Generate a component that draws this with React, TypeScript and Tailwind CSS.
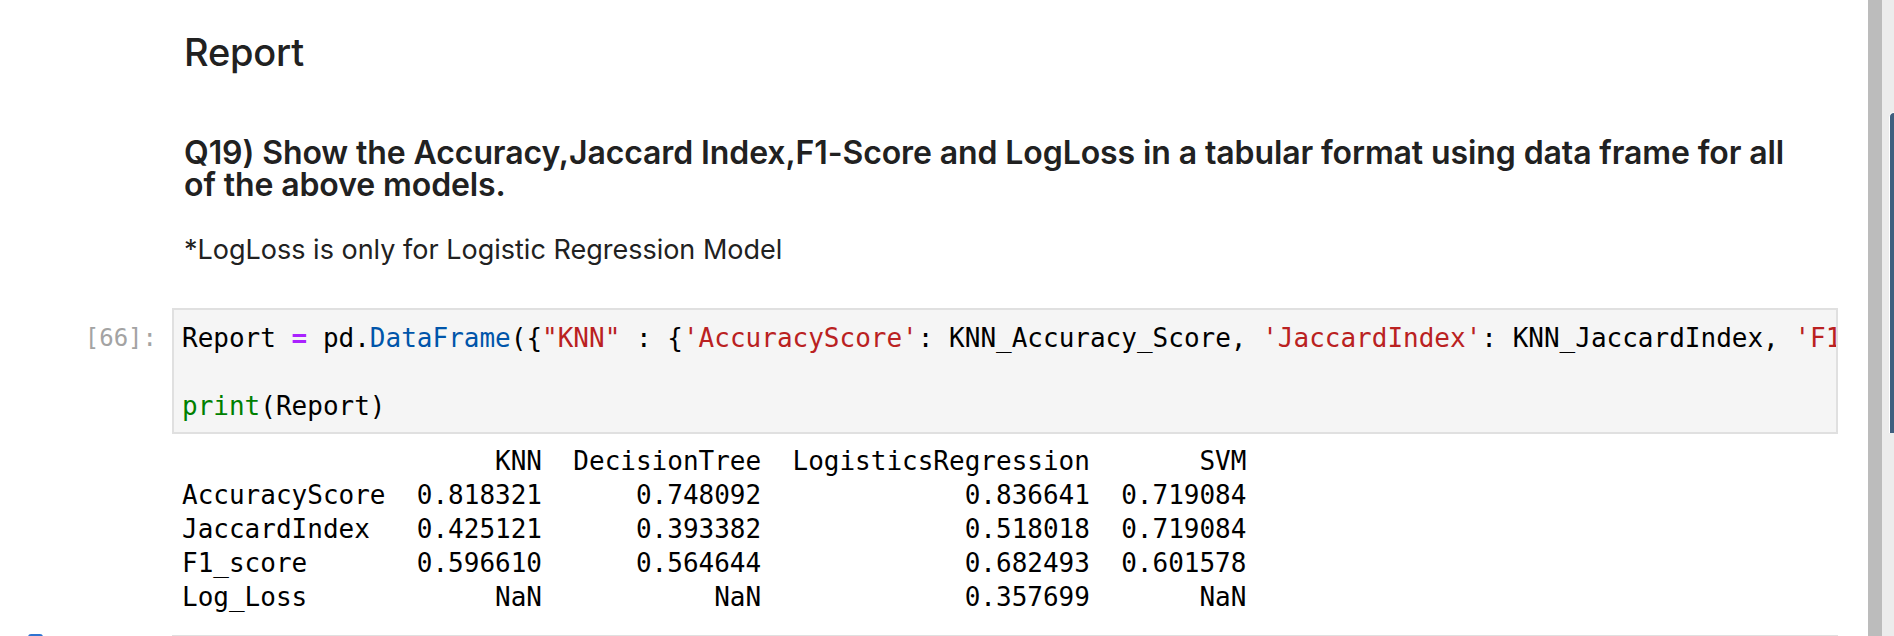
import React from "react";

const mono = { fontFamily: '"DejaVu Sans Mono", "Liberation Mono", monospace' };

const outputText = `                    KNN  DecisionTree  LogisticsRegression       SVM
AccuracyScore  0.818321      0.748092             0.836641  0.719084
JaccardIndex   0.425121      0.393382             0.518018  0.719084
F1_score       0.596610      0.564644             0.682493  0.601578
Log_Loss            NaN           NaN             0.357699       NaN`;

export default function App() {
  return (
    <div className="w-[1894px] h-[636px] flex bg-white overflow-hidden">
      <div className="flex-1 flex flex-col min-w-0">
        {/* Markdown cell */}
        <div
          className="pl-[184px] pt-[33px] text-[#212121]"
          style={{ fontFamily: 'Inter, "Noto Sans", sans-serif' }}
        >
          <h2 className="text-[38px] leading-none font-medium tracking-[-0.2px]">Report</h2>
          <h3 className="mt-[66px] w-[1630px] text-[32px] leading-[32px] font-semibold tracking-[-0.1px]">
            Q19) Show the Accuracy,Jaccard Index,F1-Score and LogLoss in a tabular format using data frame for all of the above models.
          </h3>
          <p className="mt-[32px] text-[27px] leading-[34px]">
            *LogLoss is only for Logistic Regression Model
          </p>
        </div>

        {/* Code cell */}
        <div className="mt-[41px] flex">
          <div
            className="w-[172px] shrink-0 pr-[15px] pt-[13px] text-right text-[24px] leading-[34px] text-[#a3a3a3]"
            style={mono}
          >
            [66]:
          </div>
          <div className="w-[1666px] shrink-0">
            <div
              className="h-[126px] border-2 border-[#e0e0e0] bg-[#f5f5f5] pl-[8px] pt-[11px] overflow-hidden text-[26px] leading-[34px] text-[#000] whitespace-pre"
              style={mono}
            >
              <div>
                Report <span className="text-[#aa22ff] font-bold">=</span> pd.
                <span className="text-[#0055aa]">DataFrame</span>({"{"}
                <span className="text-[#ba2121]">"KNN"</span> : {"{"}
                <span className="text-[#ba2121]">'AccuracyScore'</span>: KNN_Accuracy_Score,{" "}
                <span className="text-[#ba2121]">'JaccardIndex'</span>: KNN_JaccardIndex,{" "}
                <span className="text-[#ba2121]">'F1_score'</span>: KNN_F1_score,{" "}
                <span className="text-[#ba2121]">'Log_Loss'</span>:{" "}
                <span className="text-[#ba2121]">'NaN'</span>{"}"})
              </div>
              <div>&nbsp;</div>
              <div>
                <span className="text-[#008000]">print</span>(Report)
              </div>
            </div>
            <pre
              className="mt-[10px] pl-[10px] text-[26px] leading-[34px] text-[#000]"
              style={mono}
            >
              {outputText}
            </pre>
          </div>
        </div>

        {/* Next cell top */}
        <div className="mt-[20px] flex items-end">
          <div className="w-[172px] shrink-0 flex items-end">
            <div className="ml-[28px] w-[15px] h-[3px] rounded-t-[4px] bg-[#2f73d0]" />
          </div>
          <div className="w-[1666px] shrink-0 border-t-2 border-[#e0e0e0] h-[2px]" />
        </div>
      </div>

      {/* Right scrollbar area */}
      <div className="w-[26px] shrink-0 flex h-full">
        <div className="w-[14px] h-full bg-[#bcbcbc]" />
        <div className="flex-1 h-full bg-[#ececec] pt-[112px] pl-[7px]">
          <div className="h-[321px] w-full rounded-tl-[7px] border-l border-t border-white bg-[#3f5f7f]" />
        </div>
      </div>
    </div>
  );
}
